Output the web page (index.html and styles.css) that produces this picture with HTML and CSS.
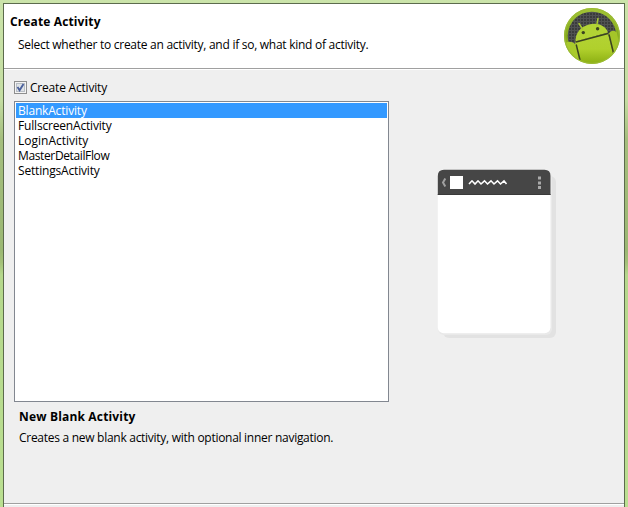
FILE: index.html
```html
<!DOCTYPE html>
<html lang="en">
<head>
<meta charset="utf-8">
<title>Create Activity</title>
<link rel="stylesheet" href="styles.css">
</head>
<body>
<main class="dialog">
  <header class="banner">
    <div class="banner-text">
      <h1 class="title">Create Activity</h1>
      <p class="subtitle">Select whether to create an activity, and if so, what kind of activity.</p>
    </div>
    <svg class="logo" width="58" height="58" viewBox="0 0 58 58">
      <defs>
        <linearGradient id="rim" x1="0" y1="0" x2="0" y2="1"><stop offset="0" stop-color="#a3c637"/><stop offset=".5" stop-color="#84a91d"/><stop offset="1" stop-color="#a0bf1c"/></linearGradient>
        <linearGradient id="green" x1="0" y1="0" x2="0" y2="1"><stop offset="0" stop-color="#b3d334"/><stop offset=".5" stop-color="#b0d02c"/><stop offset="1" stop-color="#88ac10"/></linearGradient>
        <pattern id="mesh" width="3" height="3" patternUnits="userSpaceOnUse"><rect width="3" height="3" fill="#505252"/><rect width="2" height="2" fill="#3a3c3c"/></pattern>
        <clipPath id="disc"><circle cx="29" cy="29" r="27.500"/></clipPath>
      </defs>
      <circle cx="29" cy="29" r="28" fill="url(#rim)"/>
      <circle cx="29" cy="29" r="24.300" fill="url(#mesh)"/>
      <g clip-path="url(#disc)">
        <path d="M13 34L45 26L53 58H10L8 50Z" fill="url(#green)"/>
        <path d="M12.500 34.500C12 26 18 19.500 26 17.500C34 15.500 42 18 45 25.500Z" fill="#b2d334"/>
        <path d="M19.500 22L16 16.500M33.800 18L35 11.500" stroke="#a9ca32" stroke-width="1.500" stroke-linecap="round"/>
        <path d="M0 37C5 34 10 34 12.500 38L17 58L2 56Z" fill="#a9ca2c"/>
        <path d="M45.500 28C46 23.500 52 22 54 26L58 46L51 52Z" fill="#a4c529"/>
        <path d="M13 35L45 26.500M13.200 37.500L17 53M46 27.500L50.500 46" fill="none" stroke="#3b4320" stroke-width="1.500"/>
      </g>
      <circle cx="20.300" cy="25.600" r="1.700" fill="#3b4320"/><circle cx="34.600" cy="21.800" r="1.700" fill="#3b4320"/>
      <circle cx="29" cy="29" r="27.300" fill="none" stroke="#9bbb35" stroke-width="1.200"/>
    </svg>
  </header>
  <section class="content">
    <div class="chooser">
      <div class="option">
        <svg class="check" width="13" height="13" viewBox="0 0 13 13"><rect x=".5" y=".5" width="12" height="12" fill="#f4f4f4" stroke="#8e8f8f"/><rect x="2.500" y="2.500" width="8" height="8" fill="#dfe3e7" stroke="#b8bec5"/><path d="M3.500 6L5.600 9.200L9.500 3" fill="none" stroke="#4b619c" stroke-width="1.900"/></svg>
        <span class="option-label">Create Activity</span>
      </div>
      <ul class="list">
        <li class="item snug selected">BlankActivity</li>
        <li class="item snug">FullscreenActivity</li>
        <li class="item">LoginActivity</li>
        <li class="item tight">MasterDetailFlow</li>
        <li class="item snug">SettingsActivity</li>
      </ul>
      <h2 class="name">New Blank Activity</h2>
      <p class="description">Creates a new blank activity, with optional inner navigation.</p>
    </div>
    <svg class="preview" width="120" height="170" viewBox="0 0 120 170">
      <rect x="6" y="7" width="113" height="162" rx="6" fill="#e2e2e2"/>
      <rect x="1" y="2" width="114" height="164" rx="6" fill="#e9e9e9"/>
      <rect x=".8" y="1" width="112.700" height="163.300" rx="6" fill="#fff"/>
      <path d="M.8 26V7Q.8 .8 7 .8H107.500Q113.500 .8 113.500 7V26Z" fill="#464646"/>
      <path d="M.8 25.500H113.500" stroke="#393939"/>
      <path d="M8.300 9.500L6 13.500L8.300 17.500" fill="none" stroke="#a0a0a0" stroke-width="2"/>
      <rect x="13" y="7" width="13" height="13" fill="#fff"/>
      <path d="M32 15L35 11.800L38 15L41 11.800L44 15L47.500 11.800L50.500 15L54 11.800L57 15L60.500 11.800L63.500 15L67 11.800L69.500 15" fill="none" stroke="#fff" stroke-width="1.600"/>
      <path d="M101 7.500h3v3h-3zM101 12.500h3v3h-3zM101 17h3v3h-3z" fill="#aaa"/>
    </svg>
  </section>
  <footer class="footer"></footer>
</main>
</body>
</html>
```
FILE: styles.css
```css
* { box-sizing: border-box; }
body {
  margin: 0;
  width: 628px;
  height: 507px;
  overflow: hidden;
  padding: 3px 3px 0;
  background: linear-gradient(#cbe4aa 0, #c4dda2 100px, #a5be7d 139px, #9bb873 250px, #a3c078 262px, #b5d88c 275px, #badf91 507px);
  font: 12px/15px "Open Sans", "Noto Sans", sans-serif;
  color: #000;
}
h1, h2, p, ul { margin: 0; padding: 0; }
.dialog {
  display: flex;
  flex-direction: column;
  height: 504px;
  background: #efefef;
  border: 1px solid #5c6b4d;
  border-bottom: 0;
  white-space: nowrap;
}
.banner {
  display: flex;
  justify-content: space-between;
  height: 65px;
  flex: none;
  background: #fff;
  border-bottom: 1px solid #a0a0a0;
  box-shadow: 0 1px #fff;
  padding: 3px 3px 0 6px;
}
.title { padding-top: 7px; font-size: 12px; line-height: 15px; font-weight: 700; letter-spacing: .13px; }
.subtitle { padding: 8px 0 0 8px; letter-spacing: -.27px; }
.content { display: flex; height: 434px; flex: none; padding: 12px 0 0 10px; }
.chooser { width: 375px; }
.option { display: flex; gap: 3px; height: 20px; }
.check { display: block; }
.option-label { line-height: 14px; letter-spacing: -.2px; }
.list {
  height: 301px;
  border: 1px solid #828790;
  padding: 1px;
  background: #fff;
  list-style: none;
}
.item { height: 15px; padding-left: 2px; line-height: 15px; }
.snug { letter-spacing: -.18px; }
.tight { letter-spacing: -.37px; }
.selected { background: #3399ff; color: #fff; }
.name { padding: 7px 0 0 5px; font-size: 12px; line-height: 15px; font-weight: 700; letter-spacing: .17px; }
.description { padding: 6px 0 0 5px; letter-spacing: -.28px; }
.preview { margin: 88px 0 0 48px; }
.footer { flex: 1; border-top: 1px solid #a0a0a0; box-shadow: inset 0 1px #fff; }
```
